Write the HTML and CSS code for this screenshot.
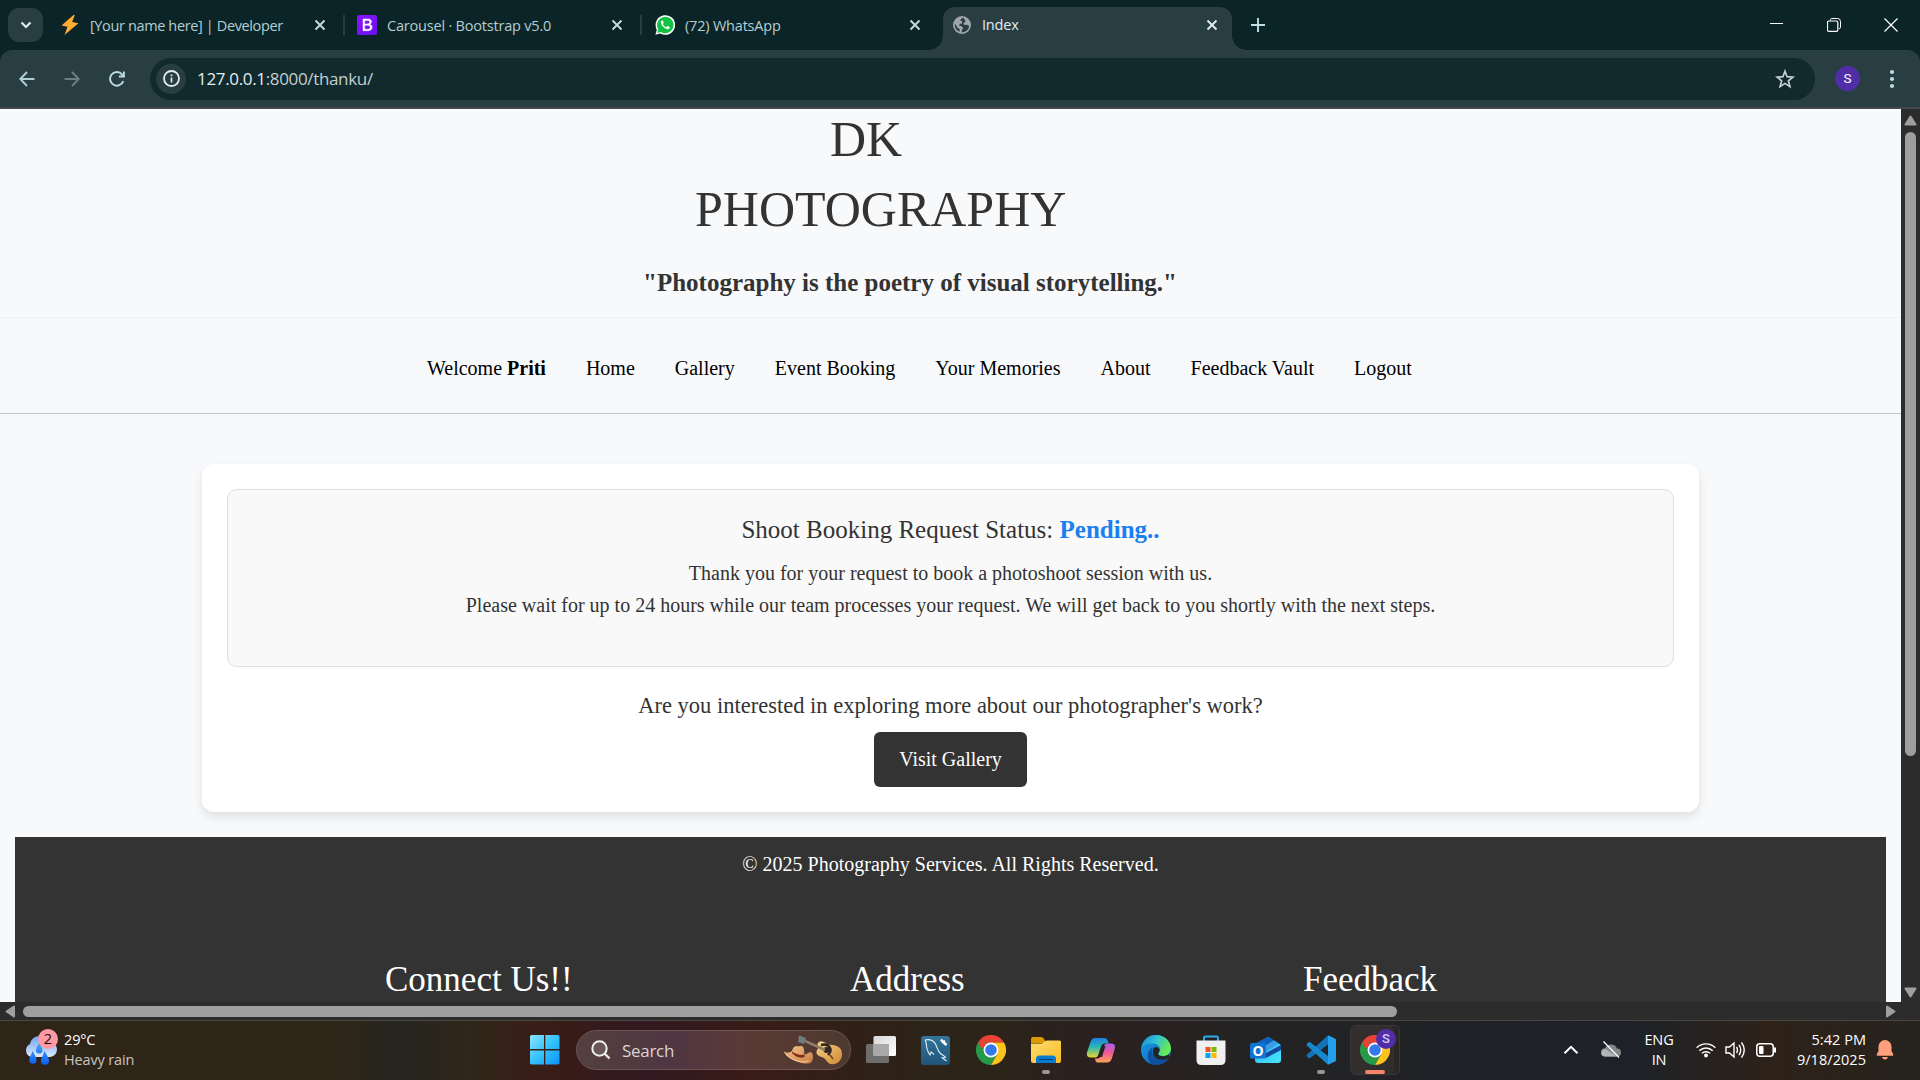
FILE: index.html
```html
<!DOCTYPE html>
<html lang="en">
<head>
<meta charset="utf-8">
<title>Index</title>
<link rel="stylesheet" href="styles.css">
</head>
<body>
<svg width="0" height="0" class="defs" aria-hidden="true">
  <defs>
    <symbol id="x" viewBox="0 0 12 12"><path d="M1.5 1.5l9 9M10.5 1.5l-9 9" fill="none" stroke="currentColor" stroke-width="1.9"/></symbol>
    <symbol id="chrome" viewBox="0 0 30 30">
      <path d="M15 15L2 7.5A15 15 0 0 1 28 7.500H15z" fill="#e94335"/>
      <path d="M2 7.500A15 15 0 0 0 15 30L21.500 18.750 15 15 8.500 18.750z" fill="#269a48"/>
      <path d="M28 7.500A15 15 0 0 1 15 30L21.500 18.750 15 7.500z" fill="#fcc31c"/>
      <path d="M2 7.500L8.500 18.750 15 15V7.500z" fill="#269a48"/>
      <path d="M2 7.500L5.500 13.500 15 7.500z" fill="#e94335"/>
      <circle cx="15" cy="15" r="7.500" fill="#fff"/><circle cx="15" cy="15" r="5.800" fill="#3479ec"/>
    </symbol>
    <linearGradient id="win" x1="0" y1="0" x2="1" y2="1"><stop offset="0" stop-color="#8be3ff"/><stop offset=".5" stop-color="#35c4fb"/><stop offset="1" stop-color="#0a92fa"/></linearGradient>
    <linearGradient id="cloud" x1="0" y1="0" x2="0" y2="1"><stop offset="0" stop-color="#6fa4f0"/><stop offset="1" stop-color="#dce8fb"/></linearGradient>
    <linearGradient id="drop" x1="0" y1="0" x2="0" y2="1"><stop offset="0" stop-color="#4aa3f5"/><stop offset="1" stop-color="#0b5ff0"/></linearGradient>
    <linearGradient id="hat" x1="0" y1="0" x2="1" y2="1"><stop offset="0" stop-color="#f7c48c"/><stop offset="1" stop-color="#c87d43"/></linearGradient>
    <linearGradient id="wood" x1="0" y1="0" x2="1" y2="1"><stop offset="0" stop-color="#f7d489"/><stop offset="1" stop-color="#cf8a34"/></linearGradient>
    <linearGradient id="tv" x1="0" y1="0" x2="1" y2="1"><stop offset="0" stop-color="#d8d8d8"/><stop offset="1" stop-color="#fff"/></linearGradient>
    <linearGradient id="sql" x1="0" y1="0" x2="0" y2="1"><stop offset="0" stop-color="#33759c"/><stop offset="1" stop-color="#1f5478"/></linearGradient>
    <linearGradient id="fold" x1="0" y1="0" x2="1" y2="1"><stop offset="0" stop-color="#ffdd6f"/><stop offset="1" stop-color="#fbbb26"/></linearGradient>
    <linearGradient id="cpa" x1="0" y1="0" x2="0" y2="1"><stop offset="0" stop-color="#1c7fe6"/><stop offset=".45" stop-color="#25b8b5"/><stop offset="1" stop-color="#e9d52d"/></linearGradient>
    <linearGradient id="cpb" x1="0" y1="0" x2="0" y2="1"><stop offset="0" stop-color="#a95cf0"/><stop offset=".5" stop-color="#ee5a92"/><stop offset="1" stop-color="#ffa45c"/></linearGradient>
    <linearGradient id="edg" x1="0" y1="0" x2="1" y2=".4"><stop offset="0" stop-color="#1689d6"/><stop offset=".5" stop-color="#31bfd5"/><stop offset="1" stop-color="#66eb52"/></linearGradient>
    <linearGradient id="edb" x1="0" y1="0" x2="1" y2="1"><stop offset="0" stop-color="#1b9ce4"/><stop offset="1" stop-color="#0762bd"/></linearGradient>
    <linearGradient id="outl" x1="0" y1="0" x2="1" y2="1"><stop offset="0" stop-color="#2cb9ef"/><stop offset="1" stop-color="#4ae4fb"/></linearGradient>
    <linearGradient id="boot" x1="0" y1="0" x2="1" y2="1"><stop offset="0" stop-color="#9013fe"/><stop offset="1" stop-color="#6610f2"/></linearGradient>
  </defs>
</svg>

<header class="browser">
  <div class="tabs">
    <button class="tab-search"><svg width="12" height="8" viewBox="0 0 12 8"><path d="M1.500 1.500L6 6l4.500-4.500" fill="none" stroke="#e3eded" stroke-width="2.200"/></svg></button>
    <div class="tab t1">
      <svg class="fav" width="20" height="20" viewBox="0 0 20 20"><path d="M13.500 0L1.500 10.500l6 1.300L4.500 20 18.500 8.300l-6.300-1.300L14.800 0z" fill="#ffac33"/></svg>
      <span class="tab-name">[Your name here] | Developer</span>
      <svg class="tab-x" width="12" height="12"><use href="#x"/></svg>
    </div>
    <div class="tab t2">
      <svg class="fav" width="20" height="20" viewBox="0 0 20 20"><rect width="20" height="20" rx="2.500" fill="url(#boot)"/><path d="M6 4h5.200c2 0 3.300 1.100 3.300 2.800 0 1.200-.8 2.200-2 2.500 1.500.2 2.600 1.300 2.600 2.900 0 2.200-1.600 3.500-4.200 3.500H6zM7.700 5.400v3.500h2.500c1.700 0 2.500-.6 2.500-1.800 0-1.100-.8-1.700-2.100-1.700zm0 4.800v4.100h2.900c1.800 0 2.700-.7 2.700-2s-1-2.100-2.900-2.100z" fill="#fff" stroke="#fff" stroke-width=".5"/></svg>
      <span class="tab-name">Carousel · Bootstrap v5.0</span>
      <svg class="tab-x" width="12" height="12"><use href="#x"/></svg>
    </div>
    <div class="tab t3">
      <svg class="fav" width="20" height="20" viewBox="0 0 20 20"><path d="M.4 19.700l1.400-5A9.800 9.800 0 1 1 5.400 18.400z" fill="#fff"/><path d="M2.200 17.900l1-3.700A8.200 8.200 0 1 1 5.800 16.900z" fill="#12c043"/><path d="M7.200 5.200c-1.200.4-1.700 1.700-1.200 3.100.9 2.700 3.100 5 6 5.800 1.300.4 2.600-.3 2.700-1.700.1-.4-2-1.500-2.400-1.300l-1 1.100c-1.600-.6-2.800-1.700-3.400-3.200l.8-1c.1-.5-.7-2.600-1.500-2.800z" fill="#fff"/></svg>
      <span class="tab-name">(72) WhatsApp</span>
      <svg class="tab-x" width="12" height="12"><use href="#x"/></svg>
    </div>
    <div class="tab active">
      <svg class="fav" width="18" height="18" viewBox="0 0 18 18"><circle cx="9" cy="9" r="9" fill="#a0a4ac"/><path d="M10.500 1.800c-2 .4-3 1.400-3.200 2.700l1.900.8-.3 2.400H7l-1 1.700 2.800.9 1.400 1.900-1.300 1.800-.3 2.300c4 .2 7.200-2.600 7.500-6.200l-2.300-1.300-2.600.2-.8-1.700 2.300-1.800z M2 7.500c-.6 3.600 1 6.800 4.500 8.200l.2-2.500-2.400-1.800z" fill="#283e43"/></svg>
      <span class="tab-name">Index</span>
      <svg class="tab-x" width="12" height="12"><use href="#x"/></svg>
    </div>
    <button class="new-tab"><svg width="14" height="14" viewBox="0 0 14 14"><path d="M7 0v14M0 7h14" stroke="#bfe0e2" stroke-width="1.900"/></svg></button>
    <div class="window-buttons">
      <svg width="14" height="14" viewBox="0 0 14 14"><path d="M0 5.500h13" stroke="#fff"/></svg>
      <svg width="14" height="14" viewBox="0 0 14 14"><path d="M3.500 2.500v-1q0-1 1-1h6q3 0 3 3v6q0 1-1.500 1" fill="none" stroke="#fff"/><rect x=".5" y="3" width="10.300" height="10.300" rx="1.300" fill="none" stroke="#fff" stroke-width="1.200"/></svg>
      <svg width="14" height="14" viewBox="0 0 14 14"><path d="M.5.500l13 13M13.500.500l-13 13" stroke="#fff" stroke-width="1.200"/></svg>
    </div>
  </div>
  <div class="toolbar">
    <div class="nav-icons">
      <svg width="16" height="16" viewBox="0 0 16 16"><path d="M15.500 8H1.500M8 1L1.300 8 8 15" fill="none" stroke="#aecfd3" stroke-width="1.900"/></svg>
      <svg width="16" height="16" viewBox="0 0 16 16"><path d="M.5 8h14M8 1l6.700 7L8 15" fill="none" stroke="#6d7e82" stroke-width="1.900"/></svg>
      <svg width="16" height="16" viewBox="0 0 16 16"><path d="M14.300 10.100A6.800 6.800 0 1 1 13.200 3.600L14.700 5.200M14.900.500V5.500H9.900" fill="none" stroke="#bcdcdf" stroke-width="1.900"/></svg>
    </div>
    <div class="omnibox">
      <span class="info"><svg width="17" height="17" viewBox="0 0 17 17"><circle cx="8.500" cy="8.500" r="7.500" fill="none" stroke="#e3eded" stroke-width="1.800"/><path d="M8.500 7.500v5M8.500 4.500v1.800" stroke="#e3eded" stroke-width="1.700"/></svg></span>
      <span class="url"><b>127.0.0.1</b>:8000/thanku/</span>
      <svg class="star" width="20" height="20" viewBox="0 0 20 20"><path d="M10 2.200l2.100 5.500 5.800.4-4.500 3.700 1.500 5.800L10 14.400l-4.900 3.200 1.500-5.800L2.100 8.100l5.800-.4z" fill="none" stroke="#c6d3d5" stroke-width="1.700"/></svg>
    </div>
    <span class="avatar">S</span>
    <svg width="6" height="20" viewBox="0 0 6 20"><g fill="#bcdcdf"><circle cx="3" cy="3" r="2.100"/><circle cx="3" cy="10" r="2.100"/><circle cx="3" cy="17" r="2.100"/></g></svg>
  </div>
</header>

<main class="viewport">
  <div class="page">
    <div class="banner">
      <h1 class="brand"><span class="brand-short">DK</span><span>PHOTOGRAPHY</span></h1>
      <p class="quote">"Photography is the poetry of visual storytelling."</p>
    </div>
    <nav class="menu">
      <a>Welcome <b>Priti</b></a><a>Home</a><a>Gallery</a><a>Event Booking</a><a>Your Memories</a><a>About</a><a>Feedback Vault</a><a>Logout</a>
    </nav>
    <section class="card">
      <div class="status">
        <h2>Shoot Booking Request Status: <b>Pending..</b></h2>
        <p>Thank you for your request to book a photoshoot session with us.<br>Please wait for up to 24 hours while our team processes your request. We will get back to you shortly with the next steps.</p>
      </div>
      <p class="ask">Are you interested in exploring more about our photographer's work?</p>
      <a class="button">Visit Gallery</a>
    </section>
    <footer class="footer">
      <p>© 2025 Photography Services. All Rights Reserved.</p>
      <div class="columns"><h3 class="c1">Connect Us!!</h3><h3 class="c2">Address</h3><h3 class="c3">Feedback</h3></div>
    </footer>
  </div>
  <div class="vscroll">
    <svg width="13" height="11" viewBox="0 0 13 11"><path d="M6.500 1.500L11.500 9.500h-10z" fill="#9f9f9f" stroke="#9f9f9f" stroke-width="2" stroke-linejoin="round"/></svg>
    <div class="vthumb"></div>
    <svg width="13" height="11" viewBox="0 0 13 11"><path d="M6.500 9.500L11.500 1.500h-10z" fill="#9f9f9f" stroke="#9f9f9f" stroke-width="2" stroke-linejoin="round"/></svg>
  </div>
  <div class="hscroll">
    <svg width="10" height="13" viewBox="0 0 10 13"><path d="M1.500 6.500L9 1.500v10z" fill="#9f9f9f" stroke="#9f9f9f" stroke-width="2" stroke-linejoin="round"/></svg>
    <div class="hthumb"></div>
    <svg class="right" width="10" height="13" viewBox="0 0 10 13"><path d="M8.500 6.500L1 1.500v10z" fill="#9f9f9f" stroke="#9f9f9f" stroke-width="2" stroke-linejoin="round"/></svg>
  </div>
</main>

<div class="taskbar">
  <div class="weather">
    <svg width="36" height="40" viewBox="0 0 36 40">
      <path d="M7 29a7 7 0 0 1-1-13A10 10 0 0 1 25 14a7.500 7.500 0 0 1 1 15z" fill="url(#cloud)"/>
      <g fill="url(#drop)"><path d="M15 15c2 3 3.500 5 3.500 7.200a3.300 3.300 0 0 1-6.600 0c0-2.400 2-4.200 3.100-7.200zM8.500 23c2 4 4 6.500 4 9a3.600 3.600 0 0 1-7.200.3c0-2.800 1.800-4.800 3.200-9.300zM20.500 23c2 4 4.500 7 4.500 9.500a4 4 0 0 1-8 .5c0-3 2-5 3.500-10z"/></g>
      <circle cx="24" cy="11" r="10" fill="#ff99a4"/>
      <text x="24" y="16.200" text-anchor="middle" font-size="14.500" fill="#1b1010">2</text>
    </svg>
    <div class="lines"><span>29°C</span><span class="dim">Heavy rain</span></div>
  </div>
  <svg class="start" width="30" height="30" viewBox="0 0 30 30"><path d="M1.500 0H14v14H0V1.500Q0 0 1.500 0zM15.300 0H28q1.500 0 1.500 1.500V14H15.300zM0 15.400h14v14H1.500Q0 29.400 0 28zM15.300 15.400h14.200V28q0 1.400-1.500 1.400H15.300z" fill="url(#win)"/></svg>
  <div class="search">
    <svg width="20" height="20" viewBox="0 0 20 20"><circle cx="8.500" cy="8.500" r="7.200" fill="#ffffff22" stroke="#f2eff0" stroke-width="2"/><path d="M13.500 13.500L18.500 18.500" stroke="#f2eff0" stroke-width="2.400"/></svg>
    <span>Search</span>
    <svg width="60" height="32" viewBox="0 0 60 32">
      <path d="M35 9q1-2.500 4.500-1.500c3 .8 4 3 7.500 3.300 6 .4 12 2 12 9.200 0 6.500-4.500 10.500-10 10.300-5-.3-5.500-5.300-9-6.800-4-1.300-7-2.500-6.500-6q.3-1.500 1.200-2.500 1-2-.2-3.500-.5-1.500.5-2.500z" fill="url(#wood)"/>
      <path d="M38 11c4-1 8 0 9.500 4 .5 2.500-.5 4-2.500 6" fill="none" stroke="#29221c" stroke-width="2.400"/>
      <circle cx="43.500" cy="16" r="3" fill="#33251a"/>
      <path d="M22 7l20 9" stroke="#8f7b65" stroke-width="2.600"/>
      <path d="M16 1.500l7 2.500-2 6-6-2z" fill="#717c7f"/>
      <path d="M47 21l3 4" stroke="#6e421a" stroke-width="1.500"/>
      <path d="M.5 17.500c3 1.700 6 1.500 8.500-.5 1-3 2-5.200 4.500-5 2 .8 4-.8 6 .5 2.200 2 1.300 5.500 2 8 2.500 0 4-2.500 7-2.200 2 2.700 2 6.700 0 9.700-3 2.500-8 1.700-13 0C9 26.200 3 22.500.5 17.500z" fill="url(#hat)"/>
      <path d="M9 19c4 4.500 8 5.500 12.500 4v-2.500c-4 1-8.500 0-12.500-3z" fill="#7d2f1b"/>
      <path d="M3 20.500c6 6 16 9 22.500 6.500" fill="none" stroke="#fbd1a0" stroke-width=".9"/>
    </svg>
  </div>
  <div class="apps">
    <div class="app"><svg width="30" height="30" viewBox="0 0 30 30"><rect x="0" y="9" width="23" height="19" rx="1.500" fill="#6d6d6d"/><rect x="7.500" y="1" width="22.500" height="20" rx="1.500" fill="url(#tv)"/><path d="M7.500 9H23v12H9q-1.500 0-1.500-1.500z" fill="#a9a9a9"/></svg></div>
    <div class="app"><svg width="29" height="29" viewBox="0 0 29 29"><rect width="29" height="29" rx="3" fill="url(#sql)"/><g fill="none" stroke="#e5eff5" stroke-width="1.100"><path d="M4 4c4-1 8 0 10.500 4 1.500 3 2 6.500 4.500 9 2 2 4.500 2.500 5.500 4.500l-3.500.2c1 1.200 3 2 4.500 3.300M4 4c2 3 1 5.500 2 8.500.7 2.500 1.200 4.500 3 6.500l1-3c1 .5 2 1.500 3 2.500"/></g><path d="M20 3.500l2 2.500 2-1M22 6l3.500 3" fill="none" stroke="#fff" stroke-width="2.400"/></svg></div>
    <div class="app"><svg width="30" height="30"><use href="#chrome"/></svg></div>
    <div class="app open"><svg width="30" height="30" viewBox="0 0 30 30"><path d="M0 8V4q0-2 2-2h8q1.500 0 2.300 1L14 5.500V8z" fill="#dc9900"/><path d="M0 8.500h10q2 0 3-1.500 1-1.500 3-1.500h12.500q1.500 0 1.500 1.500V26q0 2-2 2H2q-2 0-2-2z" fill="url(#fold)"/><path d="M5 28v-4q0-3.500 3.500-3.500h13Q25 20.500 25 24v4z" fill="#087bd0"/><path d="M8.500 24.500h13" stroke="#053f70" stroke-width="1.200" stroke-linecap="round"/></svg></div>
    <div class="app"><svg width="30" height="30" viewBox="0 0 30 30"><path d="M9 3h10q2 0 2.700 2.500l.8 3h-4q-2.500 0-3.500 3l-2.500 8q-1 3-3.500 3H5q-5 0-4-5L4.500 7Q6 3 9 3z" fill="url(#cpa)"/><path d="M21 27.500h-9.500q-2 0-2.500-4h2.500q2.500 0 3.500-3L17.500 12q1-3.500 4-3.500H25q5 0 3.800 5L26 23q-1.500 4.500-5 4.500z" fill="url(#cpb)"/><path d="M15.500 11h4L16 22h-4z" fill="#2b2022"/></svg></div>
    <div class="app"><svg width="30" height="30" viewBox="0 0 30 30"><circle cx="15" cy="15" r="15" fill="url(#edb)"/><path d="M.3 13C2 4 8 0 15 0c9 0 15 6.500 15 13.500 0 5-4 7.500-8 7.500-3 0-5-1-4.500-2.500.5-1 1.500-2 1.500-4 0-3.500-3-6-7.500-6C6 8.500 2 10.500.3 13z" fill="url(#edg)"/><path d="M11.500 12.500c-2.500 5 1.500 12 8.500 12 3.500 0 6-1 7.500-1.500C24.500 28 20 30 15 30 8 29.500 6 24 7 19c.6-3 2.500-5.500 4.500-6.500z" fill="#104f9e"/><path d="M12.500 13c2-2 5.500-1 6 1.500.3 2-1.500 3-1.300 4.500.3 2.500 6.800 3.300 10.500.500l1 2.500c-4 4-13 4-16-1.500-1.200-2.500-1.200-5.500-.2-7.500z" fill="#252324"/></svg></div>
    <div class="app"><svg width="30" height="30" viewBox="0 0 30 30"><path d="M8 7V3q0-1.500 1.500-1.500h11Q22 1.500 22 3v4" fill="none" stroke="#27ade9" stroke-width="2"/><path d="M.5 5.500h29V25q0 5-5 5h-19q-5 0-5-5z" fill="#f0f0f0"/><path d="M9.500 12h5v5h-5z" fill="#f05024"/><path d="M15.500 12h5v5h-5z" fill="#7fba00"/><path d="M9.500 18h5v5h-5z" fill="#05a4ef"/><path d="M15.500 18h5v5h-5z" fill="#ffb902"/></svg></div>
    <div class="app"><svg width="31" height="30" viewBox="0 0 31 30"><path d="M5 9L18 2l13 8v15q0 3-3 3H8q-3 0-3-3z" fill="url(#outl)"/><path d="M6 8l12-6 6 3.500L8 16z" fill="#0c62ba"/><path d="M24 5.500l5 3L16 17H8v-2z" fill="#3b9be6"/><path d="M31 10L16 18v5l15-8z" fill="#1548a0"/><rect x="0" y="8" width="16" height="15.500" rx="1.500" fill="#1173d1"/><text x="8" y="21" text-anchor="middle" font-size="14" font-weight="700" fill="#fff">O</text></svg></div>
    <div class="app open"><svg width="30" height="30" viewBox="0 0 30 30"><path d="M22 .3L29 3.500q1 .5 1 1.600v20q0 1-1 1.500L22 29.800z" fill="#249fee"/><path d="M22 .3L.8 19.800q-.8.700 0 1.500l1.800 1.600q.8.700 1.600 0L22 9.500z" fill="#1274b7"/><path d="M22 29.800L.8 10.500Q0 9.600.8 8.900l1.800-1.700q.8-.7 1.600 0L22 21z" fill="#1888cd"/></svg></div>
    <div class="app current"><svg width="30" height="30"><use href="#chrome"/></svg><span class="badge">S</span></div>
  </div>
  <div class="tray">
    <svg width="16" height="10" viewBox="0 0 16 10"><path d="M1.500 8.300L8 1.800l6.500 6.500" fill="none" stroke="#fff" stroke-width="2"/></svg>
    <svg class="cloud" width="20" height="18" viewBox="0 0 20 18"><path d="M4.500 15.500a4 4 0 0 1-.5-8.200A6.500 6.500 0 0 1 16 7.500a4 4 0 0 1 0 8z" fill="#858688"/><path d="M4.500 15.500c-6 0-5.500-7 0-7.500L16 15.500z" fill="#b3b4b5"/><path d="M2.500.500L18 16.500" stroke="#fff" stroke-width="1.300"/></svg>
    <div class="lines lang"><span>ENG</span><span>IN</span></div>
    <svg class="wifi" width="20" height="16" viewBox="0 0 20 16"><g fill="none" stroke="#fff" stroke-width="1.400"><path d="M.7 5.800a13 13 0 0 1 18.600 0M3.300 8.700a9.500 9.500 0 0 1 13.400 0M5.900 11.300a6 6 0 0 1 8.200 0"/></g><circle cx="10" cy="13.500" r="1.900" fill="#fff"/></svg>
    <svg class="sound" width="22" height="18" viewBox="0 0 22 18"><g fill="none" stroke="#fff" stroke-width="1.400"><path d="M1 6h3.500L9 2v14l-4.500-4H1zM11.500 6q2 3 0 6M14 3.800q3.500 5.200 0 10.400M16.500 1.500q5.500 7.500 0 15"/></g></svg>
    <svg class="battery" width="21" height="14" viewBox="0 0 21 14"><rect x=".8" y=".8" width="16.400" height="12.400" rx="3" fill="none" stroke="#fff" stroke-width="1.500"/><rect x="3" y="3" width="4.500" height="8" rx="1" fill="#fff"/><path d="M19 4.500v5" stroke="#fff" stroke-width="2"/></svg>
    <div class="lines clock"><span>5:42 PM</span><span>9/18/2025</span></div>
    <svg class="bell" width="18" height="20" viewBox="0 0 18 20"><path d="M9 0a6.500 6.500 0 0 1 6.500 6.500v4.500l1.800 3.500q.3 1.200-1 1.200H1.700q-1.300 0-1-1.200L2.500 11V6.500A6.500 6.500 0 0 1 9 0zM6 17h6q-.7 2.500-3 2.500T6 17z" fill="#ff9f7c"/></svg>
  </div>
</div>
</body>
</html>
```
FILE: styles.css
```css
* { box-sizing: border-box; }
body { margin: 0; width: 1920px; height: 1080px; overflow: hidden; display: flex; flex-direction: column; font-family: "Open Sans", "Noto Sans", sans-serif; }
h1, h2, h3, p { margin: 0; font-weight: 400; }
button { border: 0; padding: 0; background: none; }
svg { display: block; flex: none; }
.defs { position: absolute; }

/* browser frame */
.browser { height: 109px; background: #0b2427; border-bottom: 2px solid #47484c; flex: none; }
.tabs { height: 50px; display: flex; align-items: center; padding-left: 8px; }
.tab-search { width: 35px; height: 34px; border-radius: 11px; background: #283e43; display: grid; place-items: center; }
.tab { height: 50px; display: flex; align-items: center; color: #b3cfd3; font-size: 14.5px; flex: none; }
.tab-name { flex: 1; margin-left: 10px; white-space: nowrap; letter-spacing: -.2px; }
.t1 .tab-name { letter-spacing: -.37px; }
.tab-x { color: #c5dcdf; }
.t1 { width: 302px; padding: 0 19px 0 17px; }
.t1, .t2 { background: linear-gradient(#283e43, #283e43) right center / 2px 20px no-repeat; }
.t2 { width: 297px; padding: 0 19px 0 12px; }
.t3 { width: 301px; padding: 0 22px 0 13px; }
.active { width: 289px; height: 43px; margin-top: 7px; padding: 0 14px 8px 10px; border-radius: 12px 12px 0 0; background: #283e43; color: #e3eded; position: relative; }
.active .tab-name { margin-left: 11px; }
.active .tab-x { color: #e3eded; }
.active::before, .active::after { content: ""; position: absolute; bottom: 0; width: 14px; height: 14px; }
.active::before { left: -14px; background: radial-gradient(circle at 0 0, transparent 13.500px, #283e43 14px); }
.active::after { right: -14px; background: radial-gradient(circle at 100% 0, transparent 13.500px, #283e43 14px); }
.new-tab { margin-left: 19px; }
.window-buttons { margin-left: auto; display: flex; gap: 43px; padding-right: 22px; }
.toolbar { height: 57px; background: #283e43; border-radius: 12px 12px 0 0; display: flex; align-items: center; }
.nav-icons { width: 150px; padding-left: 19px; display: flex; gap: 29px; }
.omnibox { width: 1665px; height: 42px; border-radius: 21px; background: #112a2e; display: flex; align-items: center; padding: 0 20px 0 6px; }
.info { width: 30px; height: 30px; border-radius: 15px; background: #283e43; display: grid; place-items: center; }
.url { flex: 1; margin-left: 11px; font-size: 17px; color: #c4cfd1; letter-spacing: -.34px; }
.url b { font-weight: 400; color: #e3eded; }
.avatar { width: 25px; height: 25px; margin: 0 29px 0 20px; border-radius: 50%; background: #512da8; color: #fff; font: 13.500px/25px Roboto, sans-serif; text-align: center; }

/* page area */
.viewport { height: 911px; flex: none; display: grid; grid-template: 893px 18px / 1901px 19px; background: #2c2c2c; }
.page { background: #f8f9fb; overflow: hidden; color: #333; font: 20px/30px "Liberation Serif", serif; }
.banner { display: flow-root; height: 209px; border-bottom: 1px solid #eeeff1; }
.brand { margin-top: -5px; padding-left: 695px; width: 1066px; font-size: 50px; line-height: 70px; display: flex; flex-direction: column; }
.brand-short { padding-left: 135px; }
.quote { margin-top: 20px; padding-left: 643px; font-size: 25px; line-height: 37px; font-weight: 700; }
.menu { height: 96px; padding: 35px 0 0 427px; border-bottom: 1px solid #c4c5c9; display: flex; gap: 40px; color: #000; }
.card { width: 1497px; height: 348px; margin: 50px 0 25px 202px; padding: 25px; border-radius: 12px; background: #fff; box-shadow: 0 5px 10px rgba(0, 0, 0, .1); text-align: center; }
.status { height: 178px; padding-top: 25px; border: 1px solid #ddd; border-radius: 10px; background: #f9f9f9; }
.status h2 { font-size: 25px; line-height: 30px; margin-bottom: 12px; }
.status b { color: #1a80f0; }
.status p { line-height: 32px; }
.ask { margin: 24px 0 11px; font-size: 22.500px; }
.button { display: inline-block; padding: 12px 25px 13px; border-radius: 6px; background: #333; color: #fff; }
.footer { width: 1871px; height: 400px; margin-left: 15px; padding-top: 12px; background: #333; color: #fff; text-align: center; }
.columns { display: flex; margin-top: 80px; text-align: left; }
.columns h3 { font-size: 35px; line-height: 42px; }
.c1 { width: 465px; margin-left: 370px; }
.c2 { width: 453px; }
.vscroll { display: flex; flex-direction: column; align-items: center; padding: 6px 0 4px; }
.vthumb { width: 11px; height: 624px; margin: 6px 0 auto; border-radius: 6px; background: #9f9f9f; }
.hscroll { display: flex; align-items: center; padding-left: 5px; }
.hthumb { width: 1374px; height: 11px; margin-left: 8px; border-radius: 6px; background: #9f9f9f; }
.right { margin-left: 489px; }

/* taskbar */
.taskbar { height: 60px; flex: none; padding-bottom: 1px; border-top: 1px solid #4a4641; display: flex; align-items: center; color: #fff; font-size: 15px; background: linear-gradient(90deg, #2e2417 0, #2f2517 330px, #25251f 400px, #30261a 470px, #3a1c17 555px, #301920 640px, #3a1c18 750px, #2f2118 860px, #2c2418 980px, #2b2020 1100px, #242323 1250px, #1f2227 1450px, #1e2228 1630px, #2e2219 1770px, #26231e 1920px); }
.weather { width: 530px; padding-left: 25px; display: flex; gap: 4px; align-items: center; }
.weather svg { margin: -4px 0 0 -1px; }
.lines { display: flex; flex-direction: column; line-height: 20px; font-size: 14.500px; letter-spacing: -.15px; margin-top: -1px; }
.dim { color: #c9c5c0; }
.search { width: 275px; height: 40px; margin-left: 16px; padding: 0 7px 0 14px; border: 1px solid #6b5453; border-radius: 20px; background: linear-gradient(90deg, #53403e, #4f3642 35%, #5b3a36 60%, #4d392f); display: flex; align-items: center; color: #dcd4d3; font-size: 17px; }
.search span { flex: 1; margin-left: 11px; letter-spacing: -.3px; }
.apps { display: flex; margin-left: 2px; }
.app { width: 55px; height: 50px; display: grid; place-items: center; position: relative; }
.open::after, .current::after { content: ""; position: absolute; bottom: 1px; left: 24px; width: 8px; height: 4px; border-radius: 2px; background: #9a9692; }
.current { width: 50px; margin-left: 2px; border: 1px solid #3b3736; border-radius: 6px; background: #322e2d; box-shadow: inset -6px 0 0 -1px #292625; }
.current::after { left: 14px; bottom: 0; width: 20px; background: #f58468; }
.badge { position: absolute; left: 25px; top: 3px; width: 20px; height: 20px; border-radius: 50%; background: #512da8; color: #d6cdf0; font: 500 13px/20px Roboto, sans-serif; text-align: center; }
.tray { display: flex; align-items: center; margin-left: auto; padding-right: 26px; }
.cloud { margin-left: 22px; }
.lang { width: 40px; margin-left: 18px; text-align: center; }
.wifi { margin-left: 17px; }
.sound { margin-left: 9px; }
.battery { margin-left: 9px; }
.clock { width: 76px; margin: -1px 10px 0 13px; text-align: right; white-space: nowrap; letter-spacing: .05px; }
.clock span { align-self: flex-end; }
```
